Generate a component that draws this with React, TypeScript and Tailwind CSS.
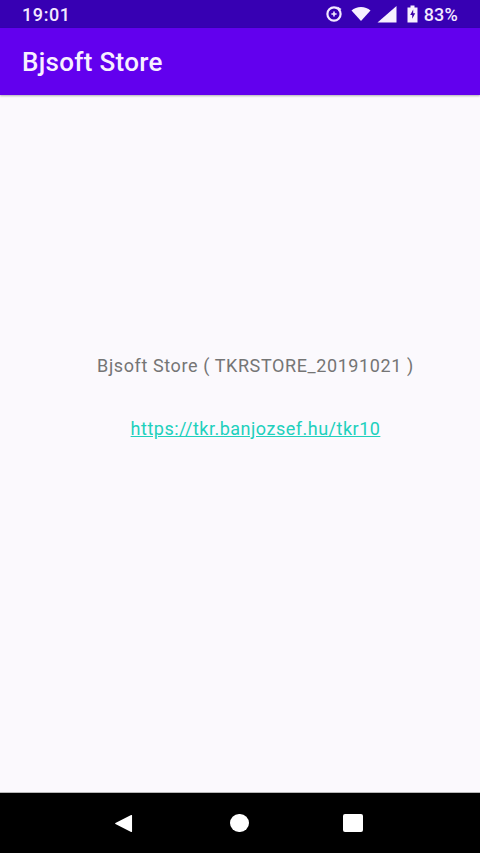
import React from 'react';

const roboto = { fontFamily: "Roboto, 'Noto Sans', sans-serif" };

function StatusIcons() {
  return (
    <div className="flex items-center">
      <svg width="18" height="18" viewBox="0 0 18 18" className="mr-[8px]">
        <circle cx="9" cy="9" r="6.6" fill="none" stroke="#f3e9ff" strokeWidth="2.2" />
        <path d="M9 6.4v5.2M6.4 9h5.2" stroke="#f3e9ff" strokeWidth="1.6" />
        <path d="M12.5 1.5l4 2.5-3 2.5z" fill="#f3e9ff" />
      </svg>
      <svg width="20" height="16" viewBox="0 0 20 16" className="mr-[6px]">
        <path d="M0.5 4.5C3 2.2 6.3 1 10 1s7 1.2 9.5 3.5L10 15z" fill="#f7f0ff" />
      </svg>
      <svg width="20" height="18" viewBox="0 0 20 18" className="mr-[10px]">
        <path d="M0.5 17.5L19.5 1v16.5z" fill="#f7f0ff" />
      </svg>
      <svg width="11" height="18" viewBox="0 0 11 18" className="mr-[6px]">
        <path d="M3.5 0.5h4v2H10.5v15H0.5v-15h3z" fill="#f7f0ff" />
        <path d="M6.2 4.5L3.2 10h2v3.8l3-5.6h-2z" fill="#3a00a8" />
      </svg>
      <span className="text-[18px] font-medium tracking-[0.2px] text-[#f3e9ff]">83%</span>
    </div>
  );
}

export default function App() {
  return (
    <div className="flex h-[853px] w-[480px] flex-col overflow-hidden bg-[#fbf9fd]" style={roboto}>
      <div className="flex h-[28px] items-center justify-between bg-[#3700b3] pl-[22px] pr-[22px]">
        <span className="text-[18px] font-medium tracking-[0.6px] text-[#f3e9ff]">19:01</span>
        <StatusIcons />
      </div>
      <div className="flex h-[67px] items-center bg-[#6200ee] pl-[22px] pt-[2px] shadow-[0_1px_2px_rgba(0,0,0,0.3)]">
        <h1 className="text-[26px] font-medium tracking-[0.3px] text-[#f8f0ff]">Bjsoft Store</h1>
      </div>

      <div className="flex flex-1 flex-col items-center pl-[31px] pt-[259px]">
        <p className="h-[24px] text-[18px] leading-[24px] tracking-[0.6px] text-[#757575]">
          Bjsoft Store ( TKRSTORE_20191021 )
        </p>
        <a
          href="https://tkr.banjozsef.hu/tkr10"
          className="mt-[39px] h-[24px] text-[18px] leading-[24px] tracking-[0.5px] text-[#20d0bc] underline"
        >
          https://tkr.banjozsef.hu/tkr10
        </a>
      </div>

      <div className="flex h-[61px] items-center border-t border-[#b8b8b8] bg-black">
        <div className="flex w-full items-center justify-center pr-[3px]">
          <svg width="19" height="19" viewBox="0 0 20 20">
            <path d="M19 1.5v17a.6.6 0 0 1-1 .4L1.5 10.5a.6.6 0 0 1 0-1L18 1.1a.6.6 0 0 1 1 .4z" fill="#fff" />
          </svg>
          <div className="ml-[97px] h-[18px] w-[19px] rounded-full bg-white" />
          <div className="ml-[94px] h-[18px] w-[20px] rounded-[2px] bg-white" />
        </div>
      </div>
    </div>
  );
}
